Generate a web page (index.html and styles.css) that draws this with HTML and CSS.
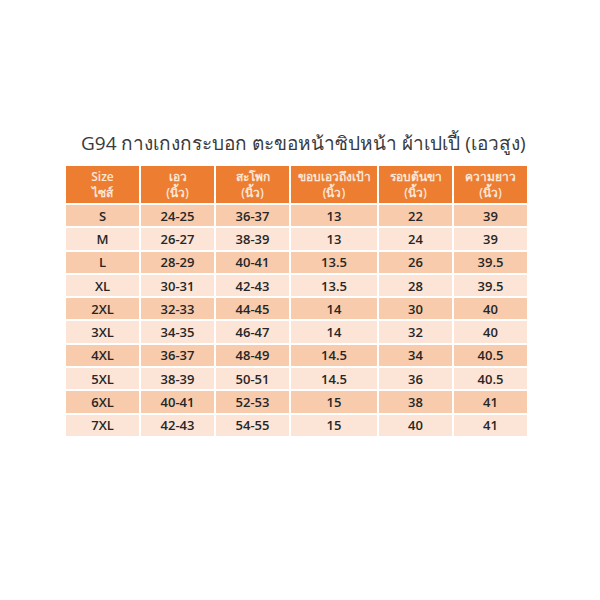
FILE: index.html
```
<!DOCTYPE html>
<html lang="th">
<head>
<meta charset="utf-8">
<link rel="stylesheet" href="styles.css">
</head>
<body>
<div class="page">
  <h1 class="title">G94 กางเกงกระบอก ตะขอหน้าซิปหน้า ผ้าเปเปี้ (เอวสูง)</h1>
  <div class="table">
    <div class="hd">Size<br>ไซส์</div>
    <div class="hd">เอว<br>(นิ้ว)</div>
    <div class="hd">สะโพก<br>(นิ้ว)</div>
    <div class="hd">ขอบเอวถึงเป้า<br>(นิ้ว)</div>
    <div class="hd">รอบต้นขา<br>(นิ้ว)</div>
    <div class="hd">ความยาว<br>(นิ้ว)</div>

    <div class="c a">S</div><div class="c a">24-25</div><div class="c a">36-37</div><div class="c a">13</div><div class="c a">22</div><div class="c a">39</div>
    <div class="c b">M</div><div class="c b">26-27</div><div class="c b">38-39</div><div class="c b">13</div><div class="c b">24</div><div class="c b">39</div>
    <div class="c a">L</div><div class="c a">28-29</div><div class="c a">40-41</div><div class="c a">13.5</div><div class="c a">26</div><div class="c a">39.5</div>
    <div class="c b">XL</div><div class="c b">30-31</div><div class="c b">42-43</div><div class="c b">13.5</div><div class="c b">28</div><div class="c b">39.5</div>
    <div class="c a">2XL</div><div class="c a">32-33</div><div class="c a">44-45</div><div class="c a">14</div><div class="c a">30</div><div class="c a">40</div>
    <div class="c b">3XL</div><div class="c b">34-35</div><div class="c b">46-47</div><div class="c b">14</div><div class="c b">32</div><div class="c b">40</div>
    <div class="c a">4XL</div><div class="c a">36-37</div><div class="c a">48-49</div><div class="c a">14.5</div><div class="c a">34</div><div class="c a">40.5</div>
    <div class="c b">5XL</div><div class="c b">38-39</div><div class="c b">50-51</div><div class="c b">14.5</div><div class="c b">36</div><div class="c b">40.5</div>
    <div class="c a">6XL</div><div class="c a">40-41</div><div class="c a">52-53</div><div class="c a">15</div><div class="c a">38</div><div class="c a">41</div>
    <div class="c b">7XL</div><div class="c b">42-43</div><div class="c b">54-55</div><div class="c b">15</div><div class="c b">40</div><div class="c b">41</div>
  </div>
</div>
</body>
</html>
```
FILE: styles.css
```
html, body {
  margin: 0;
  padding: 0;
  background: #ffffff;
}
.page {
  width: 600px;
  height: 600px;
  padding-top: 128px;
  box-sizing: border-box;
  font-family: "Open Sans", "Noto Sans", "DejaVu Sans", sans-serif;
}
.title {
  margin: 0 0 0 81px;
  font-weight: normal;
  font-size: 19px;
  line-height: 30px;
  height: 38px;
  color: #3a3a3a;
  white-space: nowrap;
  letter-spacing: 0;
}
.table {
  margin-left: 66px;
  width: 461px;
  display: grid;
  grid-template-columns: 73px 73px 73px 86px 73px 73px;
  grid-template-rows: 37px repeat(10, 21.3px);
  gap: 2px;
}
.hd {
  background: #ed7d31;
  color: #fbe6d6;
  font-size: 12px;
  line-height: 16px;
  text-align: center;
  display: flex;
  flex-direction: column;
  justify-content: center;
  font-weight: 600;
  overflow: hidden;
}
.c {
  font-size: 13px;
  font-weight: 600;
  color: #262626;
  text-align: center;
  display: flex;
  align-items: center;
  justify-content: center;
}
.a { background: #f8cbad; }
.b { background: #fce4d6; }
```
